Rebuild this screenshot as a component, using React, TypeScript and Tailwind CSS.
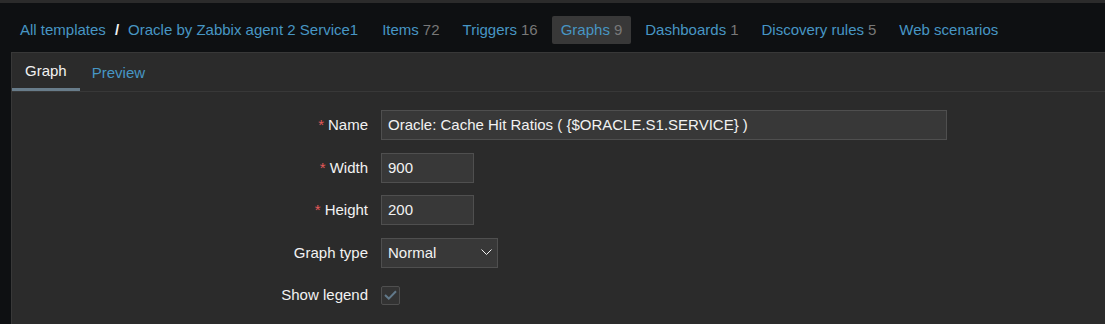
import React from 'react'

const nav = [
  { label: 'Items', count: '72' },
  { label: 'Triggers', count: '16' },
  { label: 'Graphs', count: '9', active: true },
  { label: 'Dashboards', count: '1' },
  { label: 'Discovery rules', count: '5' },
  { label: 'Web scenarios' },
]

function Label({ text, required }: { text: string; required?: boolean }) {
  return (
    <div className="flex h-[30px] items-center justify-end text-[#f2f2f2]">
      {required && <span className="mr-[4px] text-[#e45959]">*</span>}
      <span>{text}</span>
    </div>
  )
}

export default function App() {
  return (
    <div
      className="h-[324px] w-[1105px] overflow-hidden bg-[#0e1012] text-[15px] leading-[18px]"
      style={{ fontFamily: '"Liberation Sans", Arial, sans-serif' }}
    >
      <div className="h-[3px] bg-[#2b2b2b]" />

      {/* breadcrumbs + sections */}
      <div className="flex h-[49px] items-start pl-[11px] pt-[13px]">
        <a className="flex h-[28px] items-center px-[9px] text-[#4796c4]">All templates</a>
        <span className="flex h-[28px] items-center font-bold text-[#f2f2f2]">/</span>
        <a className="flex h-[28px] items-center px-[9px] text-[#4796c4]">Oracle by Zabbix agent 2 Service1</a>
        <ul className="ml-[6px] flex gap-[5px]">
          {nav.map((n) => (
            <li
              key={n.label}
              className={
                'flex h-[28px] items-center rounded-[2px] px-[9px] ' + (n.active ? 'bg-[#383838]' : '')
              }
            >
              <span className="text-[#4796c4]">{n.label}</span>
              {n.count && <span className="ml-[4px] text-[#787878]">{n.count}</span>}
            </li>
          ))}
        </ul>
      </div>

      {/* panel */}
      <div className="ml-[11px] h-[272px] border-l border-t border-[#383838] bg-[#2b2b2b]">
        <div className="flex h-[39px] border-b border-[#383838]">
          <div className="flex h-[38px] items-center border-b-[3px] border-[#687c8a] px-[13px] pt-[1px] text-[#f2f2f2]">
            Graph
          </div>
          <div className="flex h-[38px] items-center px-[12px] pt-[1px] text-[#4796c4]">Preview</div>
        </div>

        <div className="grid grid-cols-[356px_1fr] gap-x-[13px] gap-y-[12.5px] pt-[18px] text-[#f2f2f2]">
          <Label text="Name" required />
          <div className="flex h-[30px] w-[566px] items-center border border-[#4f4f4f] bg-[#383838] px-[6px]">
            Oracle: Cache Hit Ratios ( {'{$ORACLE.S1.SERVICE}'} )
          </div>

          <Label text="Width" required />
          <div className="flex h-[30px] w-[93px] items-center border border-[#4f4f4f] bg-[#383838] px-[6px]">
            900
          </div>

          <Label text="Height" required />
          <div className="flex h-[30px] w-[93px] items-center border border-[#4f4f4f] bg-[#383838] px-[6px]">
            200
          </div>

          <Label text="Graph type" />
          <div className="flex h-[30px] w-[117px] items-center justify-between border border-[#4f4f4f] bg-[#383838] pl-[6px] pr-[5px]">
            <span>Normal</span>
            <svg width="11" height="7" viewBox="0 0 11 7" fill="none">
              <path d="M0.5 0.5 L5.5 5.5 L10.5 0.5" stroke="#f2f2f2" strokeWidth="1" />
            </svg>
          </div>

          <Label text="Show legend" />
          <div className="flex h-[30px] items-center">
            <div className="flex h-[19px] w-[19px] items-center justify-center rounded-[2px] border border-[#4f4f4f] bg-[#333333]">
              <svg width="13" height="10" viewBox="0 0 13 10" fill="none">
                <path d="M1 5 L4.8 8.6 L12 1.2" stroke="#62798a" strokeWidth="2" />
              </svg>
            </div>
          </div>
        </div>
      </div>
    </div>
  )
}
